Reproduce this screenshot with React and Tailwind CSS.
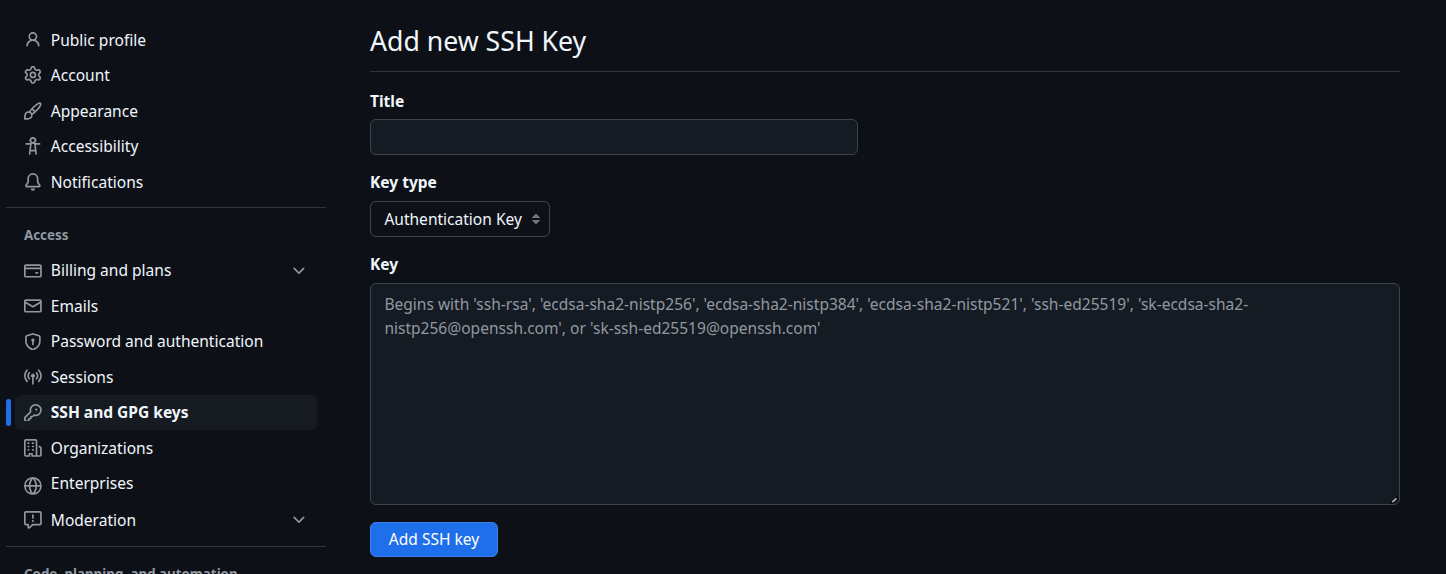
import React from "react";

const paths = {
  person:
    "M10.561 8.073a6.005 6.005 0 0 1 3.432 5.142.75.75 0 1 1-1.498.07 4.5 4.5 0 0 0-8.99 0 .75.75 0 0 1-1.498-.07 6.004 6.004 0 0 1 3.431-5.142 3.999 3.999 0 1 1 5.123 0ZM10.5 5a2.5 2.5 0 1 0-5 0 2.5 2.5 0 0 0 5 0Z",
  gear:
    "M8 0a8.2 8.2 0 0 1 .701.031C9.444.095 9.99.645 10.16 1.29l.288 1.107c.018.066.079.158.212.224.231.114.454.243.668.386.123.082.233.09.299.071l1.103-.303c.644-.176 1.392.021 1.82.63.27.385.506.792.704 1.218.315.675.111 1.422-.364 1.891l-.814.806c-.049.048-.098.147-.088.294.016.257.016.515 0 .772-.01.147.038.246.088.294l.814.806c.475.469.679 1.216.364 1.891a7.977 7.977 0 0 1-.704 1.217c-.428.61-1.176.807-1.82.63l-1.102-.302c-.067-.019-.177-.011-.3.071a5.909 5.909 0 0 1-.668.386c-.133.066-.194.158-.211.224l-.29 1.106c-.168.646-.715 1.196-1.458 1.26a8.006 8.006 0 0 1-1.402 0c-.743-.064-1.289-.614-1.458-1.26l-.289-1.106c-.018-.066-.079-.158-.212-.224a5.738 5.738 0 0 1-.668-.386c-.123-.082-.233-.09-.299-.071l-1.103.303c-.644.176-1.392-.021-1.82-.63a8.12 8.12 0 0 1-.704-1.218c-.315-.675-.111-1.422.363-1.891l.815-.806c.05-.048.098-.147.088-.294a6.214 6.214 0 0 1 0-.772c.01-.147-.038-.246-.088-.294l-.815-.806C.635 6.045.431 5.298.746 4.623a7.92 7.92 0 0 1 .704-1.217c.428-.61 1.176-.807 1.82-.63l1.102.302c.067.019.177.011.3-.071.214-.143.437-.272.668-.386.133-.066.194-.158.211-.224l.29-1.106C6.009.645 6.556.095 7.299.03 7.53.01 7.764 0 8 0Zm-.571 1.525c-.036.003-.108.036-.137.146l-.289 1.105c-.147.561-.549.967-.998 1.189-.173.086-.34.183-.5.29-.417.278-.97.423-1.529.27l-1.103-.303c-.109-.03-.175.016-.195.045-.22.312-.412.644-.573.99-.014.031-.021.11.059.19l.815.806c.411.406.562.957.53 1.456a4.709 4.709 0 0 0 0 .582c.032.499-.119 1.05-.53 1.456l-.815.806c-.081.08-.073.159-.059.19.162.346.353.677.573.989.02.03.085.076.195.046l1.102-.303c.56-.153 1.113-.008 1.53.27.161.107.328.204.501.29.447.222.85.629.997 1.189l.289 1.105c.029.109.101.143.137.146a6.6 6.6 0 0 0 1.142 0c.036-.003.108-.036.137-.146l.289-1.105c.147-.561.549-.967.998-1.189.173-.086.34-.183.5-.29.417-.278.97-.423 1.529-.27l1.103.303c.109.029.175-.016.195-.045.22-.313.411-.644.573-.99.014-.031.021-.11-.059-.19l-.815-.806c-.411-.406-.562-.957-.53-1.456a4.709 4.709 0 0 0 0-.582c-.032-.499.119-1.05.53-1.456l.815-.806c.081-.08.073-.159.059-.19a6.464 6.464 0 0 0-.573-.989c-.02-.03-.085-.076-.195-.046l-1.102.303c-.56.153-1.113.008-1.53-.27a4.44 4.44 0 0 0-.501-.29c-.447-.222-.85-.629-.997-1.189l-.289-1.105c-.029-.11-.101-.143-.137-.146a6.6 6.6 0 0 0-1.142 0ZM11 8a3 3 0 1 1-6 0 3 3 0 0 1 6 0ZM9.5 8a1.5 1.5 0 1 0-3.001.001A1.5 1.5 0 0 0 9.5 8Z",
  paintbrush:
    "M11.134 1.535c.7-.509 1.416-.942 2.076-1.155.649-.21 1.463-.267 2.069.34.603.601.568 1.411.368 2.07-.202.668-.624 1.39-1.125 2.096-1.011 1.424-2.496 2.987-3.775 4.249-1.098 1.084-2.132 1.839-3.04 2.3a3.744 3.744 0 0 1-1.055 3.217c-.431.431-1.065.691-1.657.861-.614.177-1.294.287-1.914.357A21.151 21.151 0 0 1 .797 16H.743l.007-.75H.749L.742 16a.75.75 0 0 1-.743-.742l.743-.008-.742.007v-.054a21.25 21.25 0 0 1 .13-2.284c.067-.647.187-1.287.358-1.914.17-.591.43-1.226.86-1.657a3.746 3.746 0 0 1 3.227-1.054c.466-.893 1.225-1.907 2.314-2.982 1.271-1.255 2.833-2.75 4.245-3.777ZM1.62 13.089c-.051.464-.086.929-.104 1.395.466-.018.932-.053 1.396-.104a10.511 10.511 0 0 0 1.668-.309c.526-.151.856-.325 1.011-.48a2.25 2.25 0 1 0-3.182-3.182c-.155.155-.329.485-.48 1.01a10.515 10.515 0 0 0-.309 1.67Zm10.396-10.34c-1.224.89-2.605 2.189-3.822 3.384l1.718 1.718c1.21-1.205 2.51-2.597 3.387-3.833.47-.662.78-1.227.912-1.662.134-.444.032-.551.009-.575h-.001V1.78c-.014-.014-.113-.113-.548.027-.432.14-.995.462-1.655.942Zm-4.832 7.266-.001.001a9.859 9.859 0 0 0 1.63-1.142L7.155 7.216a9.7 9.7 0 0 0-1.161 1.607c.482.302.889.71 1.19 1.192Z",
  accessibility:
    "M9.923 5.302c.063.063.122.129.178.198H14A.75.75 0 0 1 14 7h-3.3l.578 5.163.362 2.997a.75.75 0 0 1-1.49.18L9.868 13H6.132l-.282 2.34a.75.75 0 0 1-1.49-.18l.362-2.997L5.3 7H2a.75.75 0 0 1 0-1.5h3.9a2.54 2.54 0 0 1 .176-.198 3 3 0 1 1 3.847 0ZM9.2 7.073h-.001a1.206 1.206 0 0 0-2.398 0L6.305 11.5h3.39ZM9.5 3a1.5 1.5 0 1 0-3.001.001A1.5 1.5 0 0 0 9.5 3Z",
  bell:
    "M8 16a2 2 0 0 0 1.985-1.75c.017-.137-.097-.25-.235-.25h-3.5c-.138 0-.252.113-.235.25A2 2 0 0 0 8 16ZM3 5a5 5 0 0 1 10 0v2.947c0 .05.015.098.042.139l1.703 2.555A1.519 1.519 0 0 1 13.482 13H2.518a1.516 1.516 0 0 1-1.263-2.36l1.703-2.554A.255.255 0 0 0 3 7.947Zm5-3.5A3.5 3.5 0 0 0 4.5 5v2.947c0 .346-.102.683-.294.97l-1.703 2.556a.017.017 0 0 0-.003.01l.001.006c0 .002.002.004.004.006l.006.004.007.001h10.964l.007-.001.006-.004.004-.006.001-.007a.017.017 0 0 0-.003-.01l-1.703-2.554a1.745 1.745 0 0 1-.294-.97V5A3.5 3.5 0 0 0 8 1.5Z",
  card:
    "M10.75 9a.75.75 0 0 0 0 1.5h1.5a.75.75 0 0 0 0-1.5h-1.5ZM0 3.75C0 2.784.784 2 1.75 2h12.5c.966 0 1.75.784 1.75 1.75v8.5A1.75 1.75 0 0 1 14.25 14H1.75A1.75 1.75 0 0 1 0 12.25ZM14.5 6.5h-13v5.75c0 .138.112.25.25.25h12.5a.25.25 0 0 0 .25-.25Zm0-2.75a.25.25 0 0 0-.25-.25H1.75a.25.25 0 0 0-.25.25V5h13Z",
  mail:
    "M1.75 2h12.5c.966 0 1.75.784 1.75 1.75v8.5A1.75 1.75 0 0 1 14.25 14H1.75A1.75 1.75 0 0 1 0 12.25v-8.5C0 2.784.784 2 1.75 2ZM1.5 12.251c0 .138.112.25.25.25h12.5a.25.25 0 0 0 .25-.25V5.809L8.38 9.397a.75.75 0 0 1-.76 0L1.5 5.809v6.442Zm13-8.181v-.32a.25.25 0 0 0-.25-.25H1.75a.25.25 0 0 0-.25.25v.32L8 7.88Z",
  shield:
    "m8.533.133 5.25 1.68A1.75 1.75 0 0 1 15 3.48V7c0 1.566-.32 3.182-1.303 4.682-.983 1.498-2.585 2.813-5.032 3.855a1.697 1.697 0 0 1-1.33 0c-2.447-1.042-4.049-2.357-5.032-3.855C1.32 10.182 1 8.566 1 7V3.48a1.75 1.75 0 0 1 1.217-1.667l5.25-1.68a1.748 1.748 0 0 1 1.066 0Zm-.61 1.429.001.001-5.25 1.68a.251.251 0 0 0-.174.237V7c0 1.36.275 2.666 1.057 3.859.784 1.194 2.121 2.342 4.366 3.298a.196.196 0 0 0 .154 0c2.245-.957 3.582-2.103 4.366-3.297C13.225 9.666 13.5 8.358 13.5 7V3.48a.25.25 0 0 0-.174-.238l-5.25-1.68a.25.25 0 0 0-.153 0ZM9.5 6.5c0 .536-.286 1.032-.75 1.3v2.45a.75.75 0 0 1-1.5 0V7.8A1.5 1.5 0 1 1 9.5 6.5Z",
  broadcast:
    "M8.75 8.582v5.668a.75.75 0 0 1-1.5 0V8.582a1.75 1.75 0 1 1 1.5 0Zm3.983-7.125a.75.75 0 0 1 1.06.026A7.976 7.976 0 0 1 16 7c0 2.139-.84 4.083-2.207 5.517a.75.75 0 1 1-1.086-1.034A6.474 6.474 0 0 0 14.5 7a6.474 6.474 0 0 0-1.793-4.483.75.75 0 0 1 .026-1.06Zm-9.466 0c.3.286.312.76.026 1.06A6.474 6.474 0 0 0 1.5 7a6.47 6.47 0 0 0 1.793 4.483.75.75 0 0 1-1.086 1.034A7.973 7.973 0 0 1 0 7c0-2.139.84-4.083 2.207-5.517a.75.75 0 0 1 1.06-.026Zm8.556 2.321A4.988 4.988 0 0 1 13 7a4.988 4.988 0 0 1-1.177 3.222.75.75 0 1 1-1.146-.967A3.487 3.487 0 0 0 11.5 7c0-.86-.309-1.645-.823-2.255a.75.75 0 0 1 1.146-.967Zm-6.492.958A3.48 3.48 0 0 0 4.5 7a3.48 3.48 0 0 0 .823 2.255.75.75 0 0 1-1.146.967A4.981 4.981 0 0 1 3 7a4.982 4.982 0 0 1 1.188-3.236.75.75 0 1 1 1.143.972Z",
  key:
    "M10.5 0a5.499 5.499 0 1 1-1.288 10.848l-.932.932a.749.749 0 0 1-.53.22H7v.75a.749.749 0 0 1-.22.53l-.5.5a.749.749 0 0 1-.53.22H5v.75a.749.749 0 0 1-.22.53l-.5.5a.749.749 0 0 1-.53.22h-2A1.75 1.75 0 0 1 0 14.25v-2c0-.199.079-.389.22-.53l4.932-4.932A5.5 5.5 0 0 1 10.5 0Zm-4 5.5c-.001.431.069.86.205 1.269a.75.75 0 0 1-.181.768L1.5 12.56v1.69c0 .138.112.25.25.25h1.69l.06-.06v-1.19a.75.75 0 0 1 .75-.75h1.19l.06-.06v-1.19a.75.75 0 0 1 .75-.75h1.19l1.023-1.025a.75.75 0 0 1 .768-.18A4 4 0 1 0 6.5 5.5ZM11 6a1 1 0 1 1 0-2 1 1 0 0 1 0 2Z",
  organization:
    "M1.75 16A1.75 1.75 0 0 1 0 14.25V1.75C0 .784.784 0 1.75 0h8.5C11.216 0 12 .784 12 1.75v12.5c0 .085-.006.168-.018.25h2.268a.25.25 0 0 0 .25-.25V8.285a.25.25 0 0 0-.111-.208l-1.055-.703a.749.749 0 1 1 .832-1.248l1.055.703c.487.325.779.871.779 1.456v5.965A1.75 1.75 0 0 1 14.25 16h-3.5a.766.766 0 0 1-.197-.026c-.099.017-.2.026-.303.026h-3a.75.75 0 0 1-.75-.75V14h-1v1.25a.75.75 0 0 1-.75.75Zm-.25-1.75c0 .138.112.25.25.25H4v-1.25a.75.75 0 0 1 .75-.75h2.5a.75.75 0 0 1 .75.75v1.25h2.25a.25.25 0 0 0 .25-.25V1.75a.25.25 0 0 0-.25-.25h-8.5a.25.25 0 0 0-.25.25ZM3.75 6h.5a.75.75 0 0 1 0 1.5h-.5a.75.75 0 0 1 0-1.5ZM3 3.75A.75.75 0 0 1 3.75 3h.5a.75.75 0 0 1 0 1.5h-.5A.75.75 0 0 1 3 3.75Zm4 3A.75.75 0 0 1 7.75 6h.5a.75.75 0 0 1 0 1.5h-.5A.75.75 0 0 1 7 6.75ZM7.75 3h.5a.75.75 0 0 1 0 1.5h-.5a.75.75 0 0 1 0-1.5ZM3 9.75A.75.75 0 0 1 3.75 9h.5a.75.75 0 0 1 0 1.5h-.5A.75.75 0 0 1 3 9.75ZM7.75 9h.5a.75.75 0 0 1 0 1.5h-.5a.75.75 0 0 1 0-1.5Z",
  globe:
    "M8 0a8 8 0 1 1 0 16A8 8 0 0 1 8 0ZM5.78 8.75a9.64 9.64 0 0 0 1.363 4.177c.255.426.542.832.857 1.215.245-.296.551-.705.857-1.215A9.64 9.64 0 0 0 10.22 8.75Zm4.44-1.5a9.64 9.64 0 0 0-1.363-4.177c-.307-.51-.612-.919-.857-1.215a9.927 9.927 0 0 0-.857 1.215A9.64 9.64 0 0 0 5.78 7.25Zm-5.944 1.5H1.543a6.507 6.507 0 0 0 4.666 5.5c-.123-.181-.24-.365-.352-.552-.715-1.192-1.437-2.874-1.581-4.948Zm-2.733-1.5h2.733c.144-2.074.866-3.756 1.58-4.948.12-.197.237-.381.353-.552a6.507 6.507 0 0 0-4.666 5.5Zm10.181 1.5c-.144 2.074-.866 3.756-1.58 4.948-.12.197-.237.381-.353.552a6.507 6.507 0 0 0 4.666-5.5Zm2.733-1.5a6.507 6.507 0 0 0-4.666-5.5c.123.181.24.365.353.552.714 1.192 1.436 2.874 1.58 4.948Z",
  report:
    "M0 1.75C0 .784.784 0 1.75 0h12.5C15.216 0 16 .784 16 1.75v9.5A1.75 1.75 0 0 1 14.25 13H8.06l-2.573 2.573A1.458 1.458 0 0 1 3 14.543V13H1.75A1.75 1.75 0 0 1 0 11.25Zm1.75-.25a.25.25 0 0 0-.25.25v9.5c0 .138.112.25.25.25h2a.75.75 0 0 1 .75.75v2.19l2.72-2.72a.749.749 0 0 1 .53-.22h6.5a.25.25 0 0 0 .25-.25v-9.5a.25.25 0 0 0-.25-.25Zm7 2.25v2.5a.75.75 0 0 1-1.5 0v-2.5a.75.75 0 0 1 1.5 0ZM9 9a1 1 0 1 1-2 0 1 1 0 0 1 2 0Z",
  chevron:
    "M12.78 5.22a.749.749 0 0 1 0 1.06l-4.25 4.25a.749.749 0 0 1-1.06 0L3.22 6.28a.749.749 0 1 1 1.06-1.06L8 8.939l3.72-3.719a.749.749 0 0 1 1.06 0Z",
};

function Icon({ name, className = "" }) {
  return (
    <svg viewBox="0 0 16 16" fill="currentColor" className={`h-[17.8px] w-[17.8px] shrink-0 text-[#9198a1] ${className}`}>
      <path d={paths[name]} />
    </svg>
  );
}

const profileItems = [
  { icon: "person", label: "Public profile" },
  { icon: "gear", label: "Account" },
  { icon: "paintbrush", label: "Appearance" },
  { icon: "accessibility", label: "Accessibility" },
  { icon: "bell", label: "Notifications" },
];

const accessItems = [
  { icon: "card", label: "Billing and plans", expandable: true },
  { icon: "mail", label: "Emails" },
  { icon: "shield", label: "Password and authentication" },
  { icon: "broadcast", label: "Sessions" },
  { icon: "key", label: "SSH and GPG keys", active: true },
  { icon: "organization", label: "Organizations" },
  { icon: "globe", label: "Enterprises", iconClass: "mt-[5px]" },
  { icon: "report", label: "Moderation", expandable: true, rowClass: "mt-px" },
];

function NavItem({ icon, label, active, expandable, iconClass, rowClass = "" }) {
  return (
    <li className={`flex h-[35.5px] items-center ${rowClass}`}>
      <span className={active ? "h-[27px] w-[5px] rounded-full bg-[#1f6feb]" : "w-[5px]"} />
      <a
        className={`ml-[4px] flex h-[35px] w-[302px] items-center rounded-md pl-[9px] pr-[9px] ${
          active ? "bg-[#161b22] font-bold" : ""
        }`}
      >
        <Icon name={icon} className={iconClass} />
        <span className="ml-[9px] grow">{label}</span>
        {expandable && <Icon name="chevron" />}
      </a>
    </li>
  );
}

function Label({ children, htmlFor }) {
  return (
    <label htmlFor={htmlFor} className="block h-6 font-bold leading-6">
      {children}
    </label>
  );
}

export default function App() {
  return (
    <div className="flex h-[574px] overflow-hidden bg-[#0d1117] font-['Noto_Sans',sans-serif] text-[15.54px] leading-[22px] text-[#f0f6fc]">
      <nav className="ml-[6px] w-[320px] shrink-0 pt-[22px]">
        <ul>
          {profileItems.map((item) => (
            <NavItem key={item.label} {...item} />
          ))}
        </ul>
        <div className="mt-[7.5px] h-px bg-[#2f353d]" />
        <h3 className="mt-[17px] ml-[18px] h-5 text-[13.33px] font-bold leading-5 text-[#9198a1]">Access</h3>
        <ul className="mt-[7.7px]">
          {accessItems.map((item) => (
            <NavItem key={item.label} {...item} />
          ))}
        </ul>
        <div className="mt-[8.3px] h-px bg-[#2f353d]" />
        <h3 className="mt-[17px] ml-[18px] h-5 text-[13.33px] font-bold leading-5 text-[#9198a1]">
          Code, planning, and automation
        </h3>
      </nav>

      <main className="ml-[44px] w-[1030px] pt-[21px]">
        <h1 className="h-[51px] border-b border-[#2f353d] text-[26.67px] leading-[40px]">Add new SSH Key</h1>

        <form className="flex flex-col items-start">
          <div className="mt-[17px]">
            <Label htmlFor="title">Title</Label>
            <input
              id="title"
              className="mt-[6px] block h-[36px] w-[488px] rounded-md border border-[#3d444d] bg-[#151b23] px-[13px] outline-none"
            />
          </div>

          <div className="mt-[15px]">
            <Label>Key type</Label>
            <button
              type="button"
              className="mt-[7px] flex h-[36px] w-[180px] items-center justify-between rounded-md border border-[#3d444d] pl-[13.4px] pr-[9px]"
            >
              Authentication Key
              <svg viewBox="0 0 8 12" className="h-[12px] w-[8px] shrink-0 fill-[#6e7681]">
                <path d="M0 5V4.5L3.6 1h.8L8 4.5V5ZM0 7h8v.5L4.4 11h-.8L0 7.5Z" />
              </svg>
            </button>
          </div>

          <div className="mt-[15px] w-full">
            <Label htmlFor="key">Key</Label>
            <div className="relative mt-[7px]">
              <textarea
                id="key"
                placeholder="Begins with 'ssh-rsa', 'ecdsa-sha2-nistp256', 'ecdsa-sha2-nistp384', 'ecdsa-sha2-nistp521', 'ssh-ed25519', 'sk-ecdsa-sha2-nistp256@openssh.com', or 'sk-ssh-ed25519@openssh.com'"
                className="block h-[222px] w-full resize-none rounded-md border border-[#3d444d] bg-[#151b23] px-[13.4px] pt-[8px] leading-[24px] outline-none placeholder:text-[#9198a1]"
              />
              <svg viewBox="0 0 8 8" className="pointer-events-none absolute right-[2px] bottom-[1px] h-2 w-2">
                <path d="M0 7 7 0V3L3 7Z" fill="#05070a" stroke="#05070a" />
                <path d="M2.3 6.2 6.4 2.3" stroke="#b4b8bc" strokeWidth="1.7" />
              </svg>
            </div>
          </div>

          <button
            type="button"
            className="mt-[17px] h-[35px] w-[128px] rounded-md border border-[#3b7fed] bg-[#1f6feb] pb-px text-white"
          >
            Add SSH key
          </button>
        </form>
      </main>
    </div>
  );
}
